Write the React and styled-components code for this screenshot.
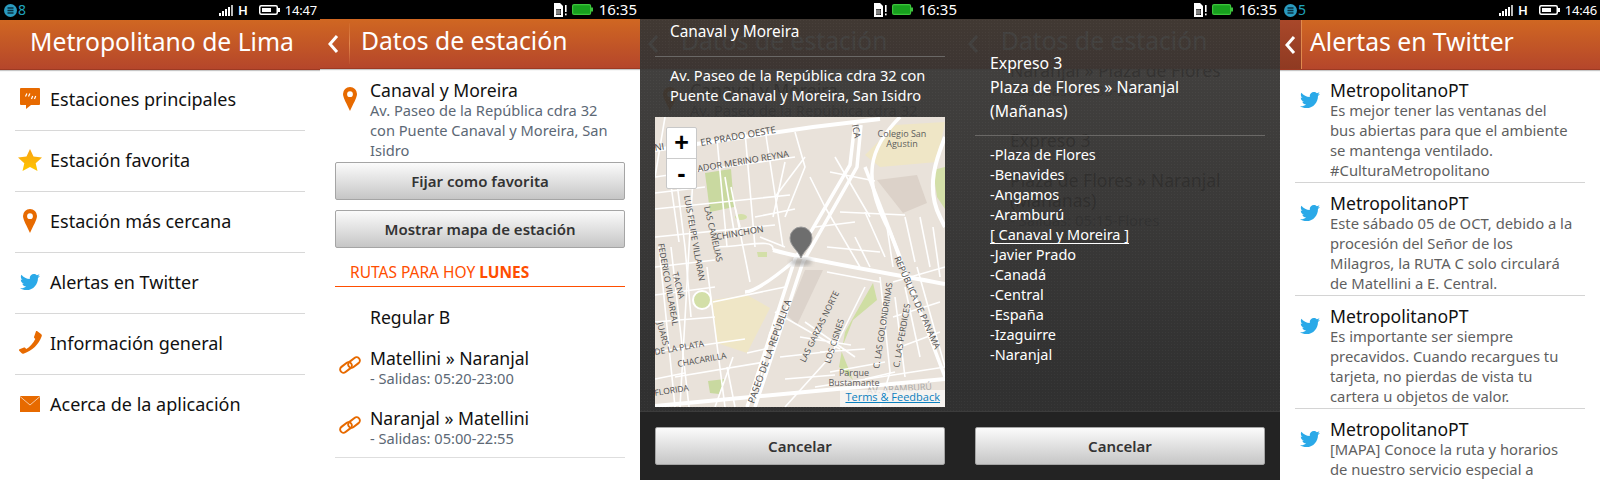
import React from "react";
import styled, { createGlobalStyle } from "styled-components";
import { FaTwitter } from "react-icons/fa";

const FONT = '"Noto Sans", "Open Sans", sans-serif';

const Global = createGlobalStyle`
  html, body { margin: 0; padding: 0; background: #fff; }
  body { font-family: ${FONT}; width: 1600px; height: 480px; overflow: hidden; }
  * { box-sizing: border-box; }
`;

const Screens = styled.div`display: flex; width: 1600px; height: 480px;`;
const Phone = styled.section`
  position: relative; width: 320px; height: 480px; overflow: hidden;
  background: #fff; display: flex; flex-direction: column;
`;

/* status bar */
const Status = styled.div`
  height: ${(p) => (p.$tall ? 20 : 19)}px; flex: none; background: #000; color: #fff;
  display: flex; align-items: center; padding: 0 3px 0 4px; position: relative; z-index: 5;
`;
const Notif = styled.div`
  display: flex; align-items: center; gap: 1px; color: #1fa3bd; font-size: 14px; line-height: 20px;
`;
const Spacer = styled.div`flex: 1;`;
const StatusIcons = styled.div`display: flex; align-items: center; gap: ${(p) => p.$gap}px;`;
const NetH = styled.span`font-size: 13px; font-weight: 600; line-height: 20px; margin-right: 7px;`;
const Clock = styled.span`
  font-size: ${(p) => p.$size}px; letter-spacing: ${(p) => p.$track}px; line-height: 19px; margin-left: 1px;
`;

const NotifDot = () => (
  <svg width="13" height="13" viewBox="0 0 13 13">
    <circle cx="6.5" cy="6.5" r="6.5" fill="#2a9bc0" />
    <path d="M3.5 4h6M3.5 6.5h6M3.5 9h6" stroke="#083040" strokeWidth="1.3" />
  </svg>
);
const Signal = () => (
  <svg width="15" height="11" viewBox="0 0 15 11" fill="#fff">
    <rect x="0" y="8" width="2" height="3" /><rect x="3" y="6" width="2" height="5" />
    <rect x="6" y="4" width="2" height="7" /><rect x="9" y="2" width="2" height="9" />
    <rect x="12" y="0" width="2" height="11" fill="#bbb" />
  </svg>
);
const WhiteBattery = () => (
  <svg width="21" height="10" viewBox="0 0 21 10">
    <rect x=".75" y=".75" width="17.5" height="8.5" rx="1.5" fill="none" stroke="#fff" strokeWidth="1.5" />
    <rect x="3" y="3" width="9" height="4" fill="#fff" />
    <rect x="19" y="3" width="2" height="4" fill="#fff" />
  </svg>
);
const GreenBattery = () => (
  <svg width="21" height="11" viewBox="0 0 21 11">
    <rect x=".6" y=".6" width="18" height="9.8" rx="1.5" fill="#17a01d" stroke="#3cc43c" strokeWidth="1.2" />
    <rect x="19" y="3.5" width="2" height="4" fill="#3cc43c" />
  </svg>
);
const Sim = () => (
  <svg width="13" height="14" viewBox="0 0 13 14" fill="#fff">
    <path d="M0 0h6l3 3v11H0z" />
    <rect x="2" y="6" width="5" height="6" fill="#000" />
    <path d="M3 6v6M5 6v6M2 8h5M2 10h5" stroke="#fff" strokeWidth=".6" />
    <rect x="11" y="2" width="1.6" height="7" /><rect x="11" y="10.5" width="1.6" height="1.8" />
  </svg>
);

const StatusBar = ({ time, count }) =>
  count ? (
    <Status $tall>
      <Notif><NotifDot />{count}</Notif>
      <Spacer />
      <StatusIcons $gap={4}><Signal /><NetH>H</NetH><WhiteBattery /><Clock $size={13} $track={-0.2}>{time}</Clock></StatusIcons>
    </Status>
  ) : (
    <Status>
      <Spacer />
      <StatusIcons $gap={5}><Sim /><GreenBattery /><Clock $size={15} $track={0}>{time}</Clock></StatusIcons>
    </Status>
  );

/* header */
const Header = styled.header`
  height: 50px; flex: none; display: flex; align-items: stretch; color: #fff; position: relative; z-index: 3;
  background: linear-gradient(#d06722, #b5462b);
  border-bottom: 1px solid #9d3a23;
  box-shadow: 0 1px 1px rgba(0,0,0,.22);
`;
const Title = styled.h1`
  margin: 0; font-weight: 400; font-size: 24.7px; line-height: 44px; flex: 1; white-space: nowrap;
  text-align: ${(p) => (p.$center ? "center" : "left")};
  padding-left: ${(p) => p.$left || 0}px;
`;
const Back = styled.div`
  width: ${(p) => p.$width}px; flex: none; display: flex; align-items: center; justify-content: center;
  background: ${(p) => (p.$dark ? "linear-gradient(#a9482a,#8f3a22)" : "transparent")};
  border-right: 1px solid ${(p) => (p.$dark ? "#e08a4f" : "transparent")};
  position: relative; padding-right: ${(p) => (p.$dark ? 2 : 5)}px;
`;
const BackRule = styled.span`
  position: absolute; right: 0; top: 4px; bottom: 4px; width: 1px;
  background: linear-gradient(rgba(235,150,90,.1), rgba(235,150,90,.8), rgba(235,150,90,.1));
`;
const Chevron = () => (
  <svg width="12" height="20" viewBox="0 0 12 20" fill="none">
    <path d="M10 2 L3 10 L10 18" stroke="#fff" strokeWidth="3" />
  </svg>
);

/* icons */
const Orange = "#e76a00";
const CommentIcon = () => (
  <svg width="20" height="21" viewBox="0 0 20 21">
    <path d="M1 0h18a1 1 0 0 1 1 1v15a1 1 0 0 1-1 1h-8l-5 4v-4H1a1 1 0 0 1-1-1V1a1 1 0 0 1 1-1z" fill={Orange} />
    <path d="M5.5 8.5l1.4-3M8.5 8.5l1.4-3M11.5 11l1.2-3M14.5 11l1.2-3" stroke="#fff" strokeWidth="1.2" fill="none" />
  </svg>
);
const StarIcon = () => (
  <svg width="24" height="22" viewBox="0 0 24 22">
    <defs><linearGradient id="st" x1="0" y1="0" x2="0" y2="1"><stop offset="0" stopColor="#f9a112" /><stop offset="1" stopColor="#ffc800" /></linearGradient></defs>
    <path d="M12 0l3.5 7.6 8.5 1-6.3 5.6 1.8 7.8L12 18l-7.5 4 1.8-7.8L0 8.6l8.5-1z" fill="url(#st)" />
  </svg>
);
const PinIcon = () => (
  <svg width="14" height="24" viewBox="0 0 14 24">
    <path fillRule="evenodd" fill={Orange} d="M7 0a7 7 0 0 1 7 7c0 4-4 10-7 17C4 17 0 11 0 7a7 7 0 0 1 7-7zm0 4.3a2.9 2.9 0 1 0 0 5.8 2.9 2.9 0 0 0 0-5.8z" />
  </svg>
);
const Bird = () => <FaTwitter size={20} color="#2aa9e8" />;
const PhoneIcon = () => (
  <svg width="23" height="23" viewBox="0 0 23 23">
    <path fill={Orange} d="M18 0l4 3c1 .7 1 1.5.6 2.5C20 13 13 20 5 22.5c-1 .3-2 .3-2.5-.5L0 19.5c-.3-.6 0-1 .5-1.2L5 16.5c.6-.2 1-.1 1.3.4l1 1.1c3.5-2 7-6 9-10l-1-1.100c-.4-.4-.4-.9-.1-1.400L17 .3c.3-.4.7-.5 1-.3z" />
  </svg>
);
const MailIcon = () => (
  <svg width="20" height="16" viewBox="0 0 20 16">
    <rect width="20" height="16" fill={Orange} />
    <path d="M0 .5L10 9 20 .5" fill="none" stroke="#f7c9a0" strokeWidth="1" />
  </svg>
);
const ChainIcon = () => (
  <svg width="22" height="18" viewBox="0 0 22 18" fill="none" stroke={Orange} strokeWidth="2">
    <rect x="0.5" y="8.2" width="13" height="6.6" rx="3.3" transform="rotate(-38 7 11.5)" />
    <rect x="8.5" y="3.2" width="13" height="6.6" rx="3.3" transform="rotate(-38 15 6.5)" />
  </svg>
);

/* menu */
const Menu = styled.nav`padding: 0 15px; flex: 1;`;
const MenuRow = styled.div`
  height: 61px; display: flex; align-items: center;
  border-bottom: ${(p) => (p.$last ? "none" : "1px solid #d8d8d8")};
  font-size: 18px; color: #111; padding-bottom: 3px;
`;
const IconCell = styled.span`
  width: 35px; flex: none; display: flex; justify-content: center; align-items: center; padding-right: 5px;
`;

/* station */
const Body = styled.main`flex: 1; padding: 11px 15px 0; display: flex; flex-direction: column;`;
const Entry = styled.div`display: flex; align-items: flex-start;`;
const EntryIcon = styled.span`
  width: 35px; flex: none; display: flex; justify-content: center; padding-right: 5px;
  padding-top: ${(p) => p.$top || 0}px;
`;
const EntryName = styled.div`font-size: 17.6px; line-height: 20px; color: #111;`;
const EntryText = styled.div`font-size: 14.65px; line-height: 20px; color: #5c6875;`;
const Btn = styled.button`
  display: block; width: 100%; height: 38px; flex: none; font-family: ${FONT}; font-size: 15px; font-weight: 600;
  color: #333; border: 1px solid #a5a5a5; border-radius: 2px; padding: 0;
  background: linear-gradient(#fbfbfb, #c6c6c6);
  margin-top: ${(p) => p.$top || 0}px;
`;
const Section = styled.h2`
  margin: 12px 0 0; height: 26px; padding-left: 15px; line-height: 25px; color: #ff4e00;
  font-size: 15.5px; font-weight: 400;
  b { font-weight: 700; }
`;
const SectionRule = styled.div`height: 1px; flex: none; background: #ff4e00;`;
const Plain = styled.div`font-size: 17.6px; line-height: 20px; color: #111; padding-left: 35px; margin-top: ${(p) => p.$top}px;`;
const Route = styled.div`display: flex; align-items: flex-start; margin-top: ${(p) => p.$top}px;`;
const Rule = styled.div`height: 1px; background: #dedede; margin-top: 9px;`;

/* dialog */
const Scrim = styled.div`
  position: absolute; left: 0; right: 0; top: 19px; bottom: 0; z-index: 4; display: flex; flex-direction: column;
  background:
    radial-gradient(rgba(255,255,255,.035) 0.6px, transparent 0.8px) 0 0 / 3px 3px,
    linear-gradient(rgba(56,54,52,.94), rgba(42,42,42,.97) 80%);
  color: #fff;
`;
const DialogMain = styled.div`flex: 1; min-height: 0; padding: 0 15px; display: flex; flex-direction: column;`;
const DialogTitle = styled.div`
  font-size: 15.4px; line-height: 26px; padding: 0 15px 11px; height: 38px; border-bottom: 1px solid #6a6866;
`;
const DialogLine = styled.div`font-size: 14.6px; line-height: 20px; padding: 0 15px; margin-top: ${(p) => p.$top || 0}px;`;
const DialogFooter = styled.footer`
  height: 69px; flex: none; padding: 15px 15px 0; background: #232323; border-top: 1px solid #3c3c3c;
`;
const MapBox = styled.div`position: relative; width: 290px; height: 290px; margin-top: 12px; overflow: hidden; background: #e9e2da;`;
const Zoom = styled.div`
  position: absolute; left: 11px; top: 10px; width: 31px; height: 62px; background: #fff;
  border: 1px solid #c8c8c8; border-radius: 2px; display: flex; flex-direction: column; color: #000;
`;
const ZoomBtn = styled.div`
  flex: 1; display: flex; align-items: center; justify-content: center; font-size: 25px; font-weight: 700;
  font-family: "Liberation Sans", sans-serif; line-height: 1;
  & + & { border-top: 1px solid #ccc; }
`;
const Terms = styled.a`
  position: absolute; right: 0; bottom: 0; padding: 0 5px 3px 5px; font-size: 11px; line-height: 14px;
  color: #0a80bf; text-decoration: underline; background: rgba(255,255,255,.6); white-space: nowrap;
  font-family: "Open Sans", sans-serif;
`;
const RouteTitle = styled.div`
  font-size: 15.8px; line-height: 24px; padding: 32px 15px 12px; height: 117px; border-bottom: 1px solid #6a6866;
`;
const Stops = styled.ul`
  list-style: none; margin: 0; padding: 8px 15px 0; font-size: 14.5px; line-height: 20px;
`;
const Stop = styled.li`
  text-decoration: ${(p) => (p.$on ? "underline" : "none")}; text-underline-offset: 3px;
`;

const Ghost = styled.div`margin-top: ${(p) => p.$shift}px; padding: 0 15px; position: relative; z-index: 1;`;
const GhostName = styled.div`font-size: 17.6px; line-height: 20px; color: #111; padding-left: 35px; margin-top: ${(p) => p.$top || 0}px;`;
const GhostText = styled.div`font-size: 14.8px; line-height: 20px; color: #5c6875; padding-left: 35px;`;

/* map */
const road = { fill: "none", stroke: "#fff" };
const Lbl = ({ x, y, r, s = 8.5, c = "#4d4d4d", children, anchor = "start" }) => (
  <text x={x} y={y} fontSize={s} fill={c} textAnchor={anchor} fontFamily='"Open Sans", sans-serif' transform={r ? `rotate(${r} ${x} ${y})` : undefined}>{children}</text>
);
const CityMap = () => (
  <svg width="290" height="290" viewBox="0 0 290 290">
    <rect width="290" height="290" fill="#e9e2da" />
    <polygon points="210,38 240,8 290,5 282,45 225,50" fill="#efe6c6" />
    <polygon points="222,63 262,58 272,86 248,96" fill="#dcd2c9" />
    <polygon points="278,53 290,50 290,92 282,80" fill="#d3dfa8" />
    <polygon points="50,56 76,52 79,90 55,95" fill="#c9d9a0" />
    <ellipse cx="86" cy="100" rx="6" ry="3" fill="#d3dfa8" />
    <polygon points="57,183 92,178 115,191 92,236 62,226" fill="#efe6c6" />
    <polygon points="150,153 168,153 142,208 132,198" fill="#dcd3cb" />
    <polygon points="218,166 222,183 198,203 186,233 198,263 184,250 190,215" fill="#cfdea3" />
    <polygon points="53,264 70,262 64,277 55,276" fill="#c9d9a0" />
    <polygon points="102,135 112,135 112,140 103,140" fill="#d3dfa8" />

    <g {...road} strokeWidth="1.6">
      <path d="M10 0L0 60M40 25L25 290M62 22L72 130M110 12L128 130M76 70L95 165M140 15L150 50L130 100" />
      <path d="M0 60L140 40M0 92L135 78M0 120L120 108M0 150L60 143M0 178L60 170M0 205L60 200M0 235L90 222M20 260L110 245" />
      <path d="M150 40L120 80M185 95L250 98M175 55L220 64M170 90L205 150M210 95L230 140M250 100L260 145M265 100L275 150" />
      <path d="M16 130L34 290M4 130L20 290M52 150L70 290M78 240L60 290" />
      <path d="M150 205L200 240M145 220L196 228M120 195L185 232M165 235L210 232M175 255L230 245M160 270L290 250" />
      <path d="M172 155L225 165M225 160L235 255L225 290M250 170L265 240M245 230L285 215M210 170L175 240L130 290" />
      <path d="M262 150L290 250M238 165L290 150" />
      <path d="M85 110L80 90M60 130C90 130 120 120 118 133M58 185L130 170M105 120L130 130" />
      <path d="M92 236L110 232" />
      <path d="M20 50L30 130M0 76L50 70M90 15L100 130M12 40L24 125M30 130L36 200M80 120L70 60M100 100L140 92M130 45L118 100" />
      <path d="M155 60L170 90M180 40L215 100M160 110L200 105M172 130L225 135M200 120L215 150M232 110L238 150M278 110L285 160" />
      <path d="M115 215L100 290M125 240L170 235M130 262L180 258M238 200L285 185M240 180L250 260M210 262L240 255M72 250L80 290M0 262L30 256" />
    </g>
    <g {...road} strokeWidth="4">
      <path d="M0 33L158 10L225 2" />
      <path d="M118 133C160 145 230 155 290 167" />
      <path d="M0 289L290 262" />
      <path d="M290 20C282 40 270 70 285 100L290 110" />
    </g>
    <g {...road} strokeWidth="3.5">
      <path d="M92 290L140 142L195 48L200 5" />
      <path d="M100 290L148 145L202 50L206 8" />
      <path d="M245 0C215 30 205 60 235 115L290 260" />
      <path d="M210 50L245 140" />
      <path d="M138 145C120 160 100 175 90 175" />
    </g>
    <circle cx="47" cy="183" r="9" fill="#d3dfa8" stroke="#fff" strokeWidth="2" />

    <Lbl x={0} y={34} r={-9} s={9.5}>NI</Lbl>
    <Lbl x={46} y={29} r={-10} s={9.5}>ER PRADO OESTE</Lbl>
    <Lbl x={43} y={55} r={-9.5} s={9}>ADOR MERINO REYNA</Lbl>
    <Lbl x={29} y={79} r={80} s={8.5}>LUIS FELIPE VILLARAN</Lbl>
    <Lbl x={49} y={90} r={77} s={8.5}>LAS CAMELIAS</Lbl>
    <Lbl x={62} y={123} r={-10} s={9}>CHINCHON</Lbl>
    <Lbl x={17} y={156} r={75} s={8.5}>TACNA</Lbl>
    <Lbl x={3} y={127} r={80} s={8.5}>FEDERICO VILLAREAL</Lbl>
    <Lbl x={2} y={206} r={75} s={8.5}>JUARS</Lbl>
    <Lbl x={0} y={238} r={-10} s={8.5}>DE LA PLATA</Lbl>
    <Lbl x={23} y={250} r={-10} s={8.5}>CHACARILLA</Lbl>
    <Lbl x={0} y={279} r={-9} s={8.5}>FLORIDA</Lbl>
    <Lbl x={99} y={287} r={-70} s={9.5}>PASEO DE LA REPÚBLICA</Lbl>
    <Lbl x={150} y={246} r={-64} s={8.5}>LAS GARZAS NORTE</Lbl>
    <Lbl x={175} y={247} r={-72} s={8.5}>LOS CISNES</Lbl>
    <Lbl x={224} y={252} r={-81} s={8.5}>C. LAS GOLONDRINAS</Lbl>
    <Lbl x={244} y={251} r={-80} s={8.5}>C. LAS PERDICES</Lbl>
    <Lbl x={239} y={141} r={66} s={9}>REPÚBLICA DE PANAMA</Lbl>
    <Lbl x={197} y={8} r={80} s={9}>ICA</Lbl>
    <Lbl x={247} y={20} s={9} anchor="middle" c="#5c5c5c">Colegio San</Lbl>
    <Lbl x={247} y={30} s={9} anchor="middle" c="#5c5c5c">Agustin</Lbl>
    <Lbl x={199} y={259} s={9} anchor="middle" c="#5c5c5c">Parque</Lbl>
    <Lbl x={199} y={269} s={9} anchor="middle" c="#5c5c5c">Bustamante</Lbl>
    <Lbl x={212} y={277} r={-4} s={9} c="#a8a8a8">AV. ARAMBURÚ</Lbl>

    <defs><filter id="bl"><feGaussianBlur stdDeviation="2" /></filter></defs>
    <ellipse cx="146" cy="145" rx="11" ry="3.5" fill="#888" opacity=".6" filter="url(#bl)" />
    <path d="M146 141c-3-8-11-12-11-20a11 11 0 0 1 22 0c0 8-8 12-11 20z" fill="#6e6e6e" stroke="#9a9a9a" strokeWidth="1" />
  </svg>
);

const StationContent = () => (
  <Body>
    <Entry>
      <EntryIcon $top={7}><PinIcon /></EntryIcon>
      <div>
        <EntryName>Canaval y Moreira</EntryName>
        <EntryText>Av. Paseo de la República cdra 32<br />con Puente Canaval y Moreira, San<br />Isidro</EntryText>
      </div>
    </Entry>
    <Btn $top={2}>Fijar como favorita</Btn>
    <Btn $top={10}>Mostrar mapa de estación</Btn>
    <Section>RUTAS PARA HOY <b>LUNES</b></Section>
    <SectionRule />
    <Plain $top={20}>Regular B</Plain>
    <Route $top={21}>
      <EntryIcon $top={8}><ChainIcon /></EntryIcon>
      <div><EntryName>Matellini » Naranjal</EntryName><EntryText>- Salidas: 05:20-23:00</EntryText></div>
    </Route>
    <Route $top={20}>
      <EntryIcon $top={8}><ChainIcon /></EntryIcon>
      <div><EntryName>Naranjal » Matellini</EntryName><EntryText>- Salidas: 05:00-22:55</EntryText></div>
    </Route>
    <Rule />
  </Body>
);

const BackButton = () => (
  <Back $width={31}><Chevron /><BackRule /></Back>
);

const menu = [
  [<CommentIcon />, "Estaciones principales"],
  [<StarIcon />, "Estación favorita"],
  [<PinIcon />, "Estación más cercana"],
  [<Bird />, "Alertas en Twitter"],
  [<PhoneIcon />, "Información general"],
  [<MailIcon />, "Acerca de la aplicación"],
];
const stops = ["-Plaza de Flores", "-Benavides", "-Angamos", "-Aramburú", "[ Canaval y Moreira ]", "-Javier Prado", "-Canadá", "-Central", "-España", "-Izaguirre", "-Naranjal"];
const tweets = [
  ["Es mejor tener las ventanas del", "bus abiertas para que el ambiente", "se mantenga ventilado.", "#CulturaMetropolitano"],
  ["Este sábado 05 de OCT, debido a la", "procesión del Señor de los", "Milagros, la RUTA C solo circulará", "de Matellini a E. Central."],
  ["Es importante ser siempre", "precavidos. Cuando recargues tu", "tarjeta, no pierdas de vista tu", "cartera u objetos de valor."],
  ["[MAPA] Conoce la ruta y horarios", "de nuestro servicio especial a", "", ""],
];
const TweetList = styled.div`padding: 0 15px; flex: 1; overflow: hidden;`;
const Tweet = styled.article`
  display: flex; align-items: flex-start; padding: 10px 0 2px; border-bottom: 1px solid #d4d4d4;
`;
const TweetIcon = styled.span`width: 35px; flex: none; padding: 10px 5px 0 0; display: flex; justify-content: center;`;
const TweetName = styled.div`font-size: 17.6px; line-height: 20px; color: #111;`;
const TweetText = styled.div`font-size: 14.8px; line-height: 20px; color: #5f5f5f; white-space: nowrap; min-height: 20px;`;

export default function App() {
  return (
    <Screens>
      <Global />
      <Phone>
        <StatusBar time="14:47" count="8" />
        <Header><Title $center $left={4}>Metropolitano de Lima</Title></Header>
        <Menu>
          {menu.map(([icon, label], i) => (
            <MenuRow key={label} $last={i === menu.length - 1}>
              <IconCell>{icon}</IconCell>{label}
            </MenuRow>
          ))}
        </Menu>
      </Phone>

      <Phone>
        <StatusBar time="16:35" />
        <Header><BackButton /><Title $left={10}>Datos de estación</Title></Header>
        <StationContent />
      </Phone>

      <Phone>
        <StatusBar time="16:35" />
        <Header><BackButton /><Title $left={10}>Datos de estación</Title></Header>
        <StationContent />
        <Scrim>
          <DialogMain>
            <DialogTitle>Canaval y Moreira</DialogTitle>
            <DialogLine $top={8}>Av. Paseo de la República cdra 32 con<br />Puente Canaval y Moreira, San Isidro</DialogLine>
            <MapBox>
              <CityMap />
              <Zoom><ZoomBtn>+</ZoomBtn><ZoomBtn>-</ZoomBtn></Zoom>
              <Terms>Terms &amp; Feedback</Terms>
            </MapBox>
          </DialogMain>
          <DialogFooter><Btn>Cancelar</Btn></DialogFooter>
        </Scrim>
      </Phone>

      <Phone>
        <StatusBar time="16:35" />
        <Header><BackButton /><Title $left={10}>Datos de estación</Title></Header>
        <Ghost $shift={-9}>
          <GhostName>Naranjal » Plaza de Flores</GhostName>
          <GhostText>- Salidas: 05:35-20:50</GhostText>
          <GhostName $top={30}>Expreso 3</GhostName>
          <GhostName $top={20}>Plaza de Flores » Naranjal</GhostName>
          <GhostName>(Mañanas)</GhostName>
          <GhostText>- Salidas: 05:15-Flores</GhostText>
        </Ghost>
        <Scrim>
          <DialogMain>
            <RouteTitle>Expreso 3<br />Plaza de Flores » Naranjal<br />(Mañanas)</RouteTitle>
            <Stops>
              {stops.map((s) => <Stop key={s} $on={s.startsWith("[")}>{s}</Stop>)}
            </Stops>
          </DialogMain>
          <DialogFooter><Btn>Cancelar</Btn></DialogFooter>
        </Scrim>
      </Phone>

      <Phone>
        <StatusBar time="14:46" count="5" />
        <Header>
          <Back $width={22} $dark><Chevron /></Back>
          <Title $left={8}>Alertas en Twitter</Title>
        </Header>
        <TweetList>
          {tweets.map((t, i) => (
            <Tweet key={i}>
              <TweetIcon><Bird /></TweetIcon>
              <div>
                <TweetName>MetropolitanoPT</TweetName>
                {t.map((l, j) => <TweetText key={j}>{l}</TweetText>)}
              </div>
            </Tweet>
          ))}
        </TweetList>
      </Phone>
    </Screens>
  );
}
